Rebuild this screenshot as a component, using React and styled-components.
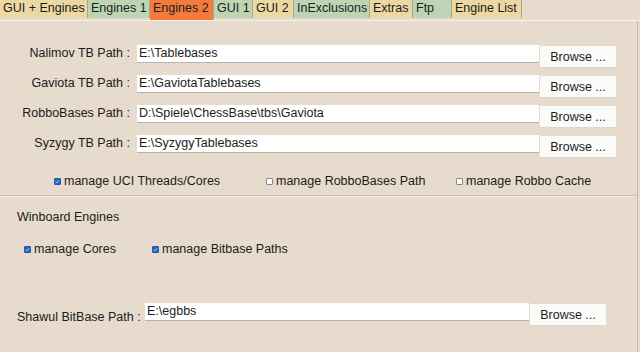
import React from 'react';
import styled, { createGlobalStyle } from 'styled-components';

const Global = createGlobalStyle`
  html, body {
    margin: 0;
    padding: 0;
    background: #e6dbcc;
    font-family: "Liberation Sans", Arial, sans-serif;
    font-size: 12.5px;
    color: #1c1c1c;
  }
`;

const Page = styled.div`
  width: 640px;
  height: 352px;
  display: flex;
  flex-direction: column;
  overflow: hidden;
`;

const TabBar = styled.div`
  display: flex;
  align-items: flex-start;
  height: 20px;
  border-bottom: 1px solid #f6f1ea;
`;

const tabColors = {
  yellow: '#ebd8a2',
  green: '#bdd4b5',
  active: '#f47a3d',
};

const Tab = styled.div`
  width: ${(p) => p.$w}px;
  height: ${(p) => (p.$kind === 'active' ? 20 : 18)}px;
  line-height: 17px;
  padding-left: 3px;
  box-sizing: border-box;
  background: ${(p) => tabColors[p.$kind]};
  border-right: 1px solid #a8a68e;
  white-space: nowrap;
  overflow: hidden;
`;

const Panel = styled.div`
  flex: 1;
  width: 637px;
  border-right: 1px solid #c4b9aa;
  display: flex;
  flex-direction: column;
`;

const TopSection = styled.div`
  padding: 24px 0 0 0;
  height: 175px;
  box-sizing: border-box;
  border-bottom: 1px solid #c9bfb1;
  box-shadow: 0 1px 0 #f1ebe2;
`;

const PathRow = styled.div`
  display: flex;
  align-items: flex-start;
  height: 30px;
  margin-top: ${(p) => p.$mt || 0}px;
`;

const Label = styled.div`
  width: ${(p) => p.$w}px;
  text-align: ${(p) => (p.$left ? 'left' : 'right')};
  padding-left: ${(p) => p.$pl || 0}px;
  box-sizing: border-box;
  line-height: 16px;
  white-space: nowrap;
  margin-top: ${(p) => p.$mt || 0}px;
`;

const PathInput = styled.div`
  width: ${(p) => p.$w}px;
  height: 18px;
  margin-left: ${(p) => p.$ml}px;
  background: #fff;
  border-bottom: 1px solid #b9b2a8;
  box-sizing: border-box;
  padding-left: 2px;
  line-height: 17px;
  white-space: nowrap;
`;

const BrowseButton = styled.div`
  width: 76px;
  height: 21px;
  margin-top: 1px;
  margin-left: 1px;
  background: #fbfbfa;
  box-shadow: 0 1px 0 #ddd6cc;
  display: flex;
  align-items: center;
  justify-content: center;
`;

const CheckRow = styled.div`
  display: flex;
  align-items: center;
  height: 16px;
  padding-left: ${(p) => p.$pl}px;
  margin-top: ${(p) => p.$mt}px;
`;

const CheckItem = styled.div`
  display: flex;
  align-items: center;
  width: ${(p) => p.$w}px;
  white-space: nowrap;
`;

const Box = styled.span`
  width: 7px;
  height: 7px;
  box-sizing: border-box;
  border-radius: 1px;
  margin-right: 3px;
  display: inline-flex;
  align-items: center;
  justify-content: center;
  background: ${(p) => (p.$on ? '#2167bf' : '#fdfdfd')};
  border: 1px solid ${(p) => (p.$on ? '#1d5aa8' : '#8a8a8a')};
`;

const SectionTitle = styled.div`
  padding-left: 17px;
  margin-top: 13px;
  line-height: 16px;
`;

const BottomSection = styled.div`
  display: flex;
  flex-direction: column;
`;

const Check = ({ on, w, children }) => (
  <CheckItem $w={w}>
    <Box $on={on}>
      {on && (
        <svg width="5" height="5" viewBox="0 0 5 5">
          <path d="M0.6 2.6 L2 3.8 L4.4 1" stroke="#a9c8ef" strokeWidth="1" fill="none" />
        </svg>
      )}
    </Box>
    {children}
  </CheckItem>
);

const tabs = [
  ['GUI + Engines', 88, 'yellow'],
  ['Engines 1', 62, 'green'],
  ['Engines 2', 64, 'active'],
  ['GUI 1', 39, 'green'],
  ['GUI 2', 41, 'yellow'],
  ['InExclusions', 76, 'green'],
  ['Extras', 43, 'yellow'],
  ['Ftp', 39, 'green'],
  ['Engine List', 70, 'yellow'],
];

const paths = [
  ['Nalimov TB Path :', 'E:\\Tablebases'],
  ['Gaviota TB Path :', 'E:\\GaviotaTablebases'],
  ['RobboBases Path :', 'D:\\Spiele\\ChessBase\\tbs\\Gaviota'],
  ['Syzygy TB Path :', 'E:\\SyzygyTablebases'],
];

export default function App() {
  return (
    <Page>
      <Global />
      <TabBar>
        {tabs.map(([t, w, k]) => (
          <Tab key={t} $w={w} $kind={k}>{t}</Tab>
        ))}
      </TabBar>
      <Panel>
        <TopSection>
          {paths.map(([label, value]) => (
            <PathRow key={label}>
              <Label $w={130}>{label}</Label>
              <PathInput $w={402} $ml={7}>{value}</PathInput>
              <BrowseButton>Browse ...</BrowseButton>
            </PathRow>
          ))}
          <CheckRow $pl={54} $mt={8}>
            <Check on w={212}>manage UCI Threads/Cores</Check>
            <Check w={190}>manage RobboBases Path</Check>
            <Check>manage Robbo Cache</Check>
          </CheckRow>
        </TopSection>
        <BottomSection>
          <SectionTitle>Winboard Engines</SectionTitle>
          <CheckRow $pl={24} $mt={16}>
            <Check on w={128}>manage Cores</Check>
            <Check on>manage Bitbase Paths</Check>
          </CheckRow>
          <PathRow $mt={46}>
            <Label $w={145} $left $pl={17} $mt={6}>Shawul BitBase Path :</Label>
            <PathInput $w={384} $ml={0}>E:\egbbs</PathInput>
            <BrowseButton>Browse ...</BrowseButton>
          </PathRow>
        </BottomSection>
      </Panel>
    </Page>
  );
}
